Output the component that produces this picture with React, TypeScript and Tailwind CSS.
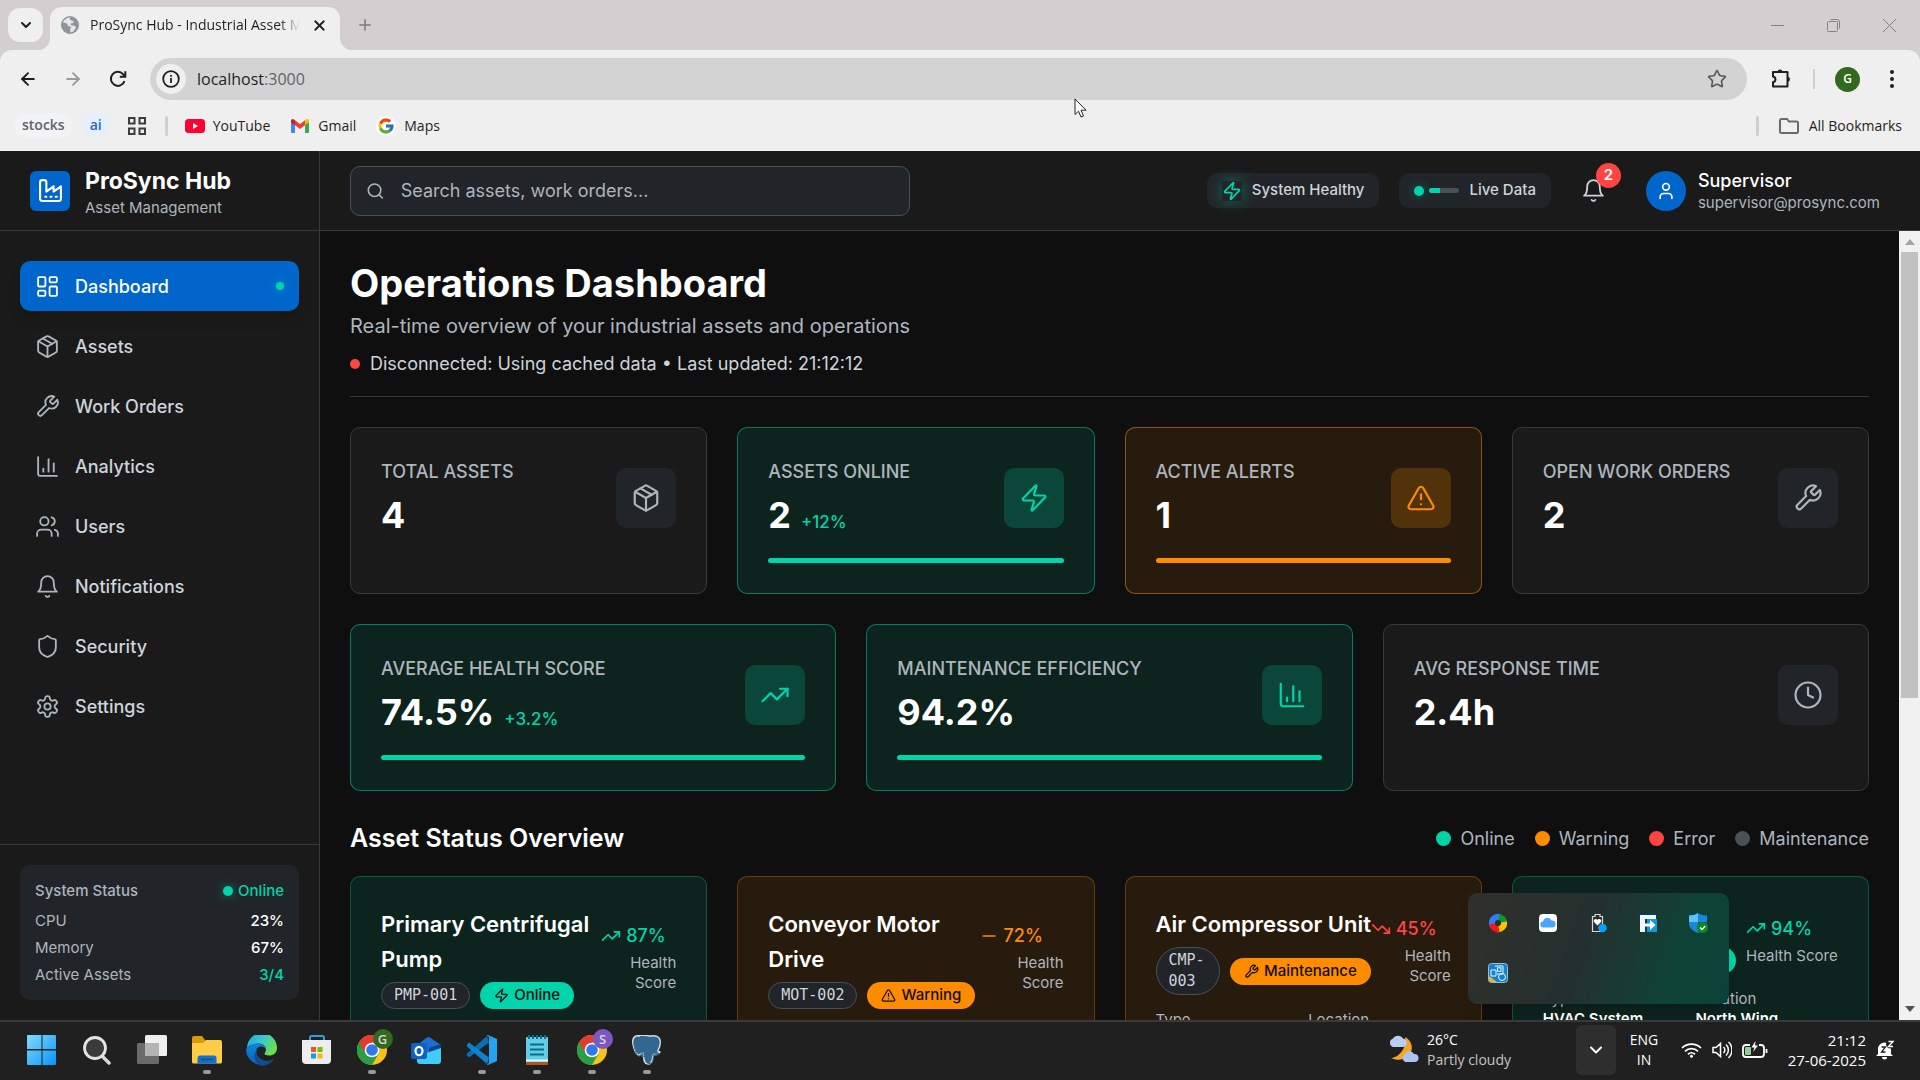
import React from "react";
import {
  LayoutDashboard,
  Package,
  ChartColumn,
  Users,
  Shield,
  Search,
  Zap,
  User,
  TriangleAlert,
  TrendingUp,
  TrendingDown,
  Minus,
  Clock,
  ChevronDown,
  Plus,
  X,
  Star,
  ArrowLeft,
  ArrowRight,
} from "lucide-react";
import { FcGoogle } from "react-icons/fc";
import { SiPostgresql } from "react-icons/si";

type IconProps = { size?: number; strokeWidth?: number; className?: string };

function Stroke({ size = 24, strokeWidth = 2, className, children }: IconProps & { children: React.ReactNode }) {
  return (
    <svg width={size} height={size} viewBox="0 0 24 24" fill="none" stroke="currentColor" strokeWidth={strokeWidth} strokeLinecap="round" strokeLinejoin="round" className={className} aria-hidden="true">
      {children}
    </svg>
  );
}

const Factory = (p: IconProps) => (
  <Stroke {...p}>
    <path d="M2 20a2 2 0 0 0 2 2h16a2 2 0 0 0 2-2V8l-7 5V8l-7 5V4a2 2 0 0 0-2-2H4a2 2 0 0 0-2 2Z" />
    <path d="M17 18h1M12 18h1M7 18h1" />
  </Stroke>
);
const Bell = (p: IconProps) => (
  <Stroke {...p}>
    <path d="M6 8a6 6 0 0 1 12 0c0 7 3 9 3 9H3s3-2 3-9" />
    <path d="M10.3 21a1.94 1.94 0 0 0 3.4 0" />
  </Stroke>
);
const Wrench = (p: IconProps) => (
  <Stroke {...p}>
    <path d="M14.7 6.3a1 1 0 0 0 0 1.4l1.6 1.6a1 1 0 0 0 1.4 0l3.77-3.77a6 6 0 0 1-7.94 7.94l-6.91 6.91a2.12 2.12 0 0 1-3-3l6.91-6.91a6 6 0 0 1 7.94-7.94l-3.76 3.76z" />
  </Stroke>
);
const Settings = (p: IconProps) => (
  <Stroke {...p}>
    <path d="M12.22 2h-.44a2 2 0 0 0-2 2v.18a2 2 0 0 1-1 1.73l-.43.25a2 2 0 0 1-2 0l-.15-.08a2 2 0 0 0-2.73.73l-.22.38a2 2 0 0 0 .73 2.73l.15.1a2 2 0 0 1 1 1.72v.51a2 2 0 0 1-1 1.74l-.15.09a2 2 0 0 0-.73 2.73l.22.38a2 2 0 0 0 2.73.73l.15-.08a2 2 0 0 1 2 0l.43.25a2 2 0 0 1 1 1.73V20a2 2 0 0 0 2 2h.44a2 2 0 0 0 2-2v-.18a2 2 0 0 1 1-1.73l.43-.25a2 2 0 0 1 2 0l.15.08a2 2 0 0 0 2.73-.73l.22-.39a2 2 0 0 0-.73-2.73l-.15-.08a2 2 0 0 1-1-1.74v-.5a2 2 0 0 1 1-1.74l.15-.09a2 2 0 0 0 .73-2.73l-.22-.38a2 2 0 0 0-2.73-.73l-.15.08a2 2 0 0 1-2 0l-.43-.25a2 2 0 0 1-1-1.73V4a2 2 0 0 0-2-2z" />
    <circle cx="12" cy="12" r="3" />
  </Stroke>
);

/* ---------- Browser window ---------- */

function BrowserChrome() {
  return (
    <div className="shrink-0 bg-[#d3cecf] font-['Open_Sans',sans-serif] text-[#1f1f1f]">
      <div className="flex h-[50px] items-center">
        <button aria-label="Search tabs" className="ml-2 grid h-[34px] w-[35px] place-items-center rounded-xl bg-[#efefef]">
          <ChevronDown size={16} strokeWidth={3} />
        </button>
        <div className="relative ml-[7px] flex h-[43px] w-[290px] items-center self-end rounded-t-xl bg-[#efefef] pr-3 pb-[7px] pl-[11px]">
          <svg className="absolute bottom-0 -left-3" width="12" height="12" aria-hidden="true"><path d="M12 0v12H0A12 12 0 0 0 12 0Z" fill="#efefef" /></svg>
          <svg className="absolute -right-3 bottom-0" width="12" height="12" aria-hidden="true"><path d="M0 0v12h12A12 12 0 0 1 0 0Z" fill="#efefef" /></svg>
          <svg width="18" height="18" viewBox="0 0 18 18" aria-hidden="true">
            <circle cx="9" cy="9" r="9" fill="#8f9499" />
            <path d="M9.500 1.600C6 1.500 3 3.600 2 6.800c1.500.3 3 .2 4 1 .8.8.3 1.900 1.400 2.300 1.200.4 2.300.2 2.600 1.200.2.800-.9 1.200-.9 2.200 0 .9.600 1.700 0 2.700 1.200.1 2.600-.3 3.500-.9.200-1.200 1.300-1.700 1.900-2.800.5-.9.400-2-.5-2.500-1.200-.7-2.600-.1-3.700-.7-.7-.4-.9-1.300-.3-1.800.7-.5 1.700-.1 2.300-.8.500-.7.100-1.500-.6-1.900-.9-.5-2.200-.3-2.700-1.200-.3-.7 0-1.500.5-2Z" fill="#e4e6e8" />
          </svg>
          <span className="ml-[11px] w-[210px] overflow-hidden bg-gradient-to-r from-[#1f1f1f] from-90% to-transparent to-100% bg-clip-text text-sm whitespace-nowrap text-transparent">ProSync Hub - Industrial Asset M</span>
          <button aria-label="Close tab" className="ml-auto"><X size={17} strokeWidth={2.500} /></button>
        </div>
        <button aria-label="New tab" className="ml-4 text-[#7d7a7a]"><Plus size={18} strokeWidth={2} /></button>
        <div className="ml-auto flex items-center gap-[43px] pr-6 text-[#858283]">
          <button aria-label="Minimize"><svg width="13" height="13"><path d="M0 6.500h13" stroke="currentColor" /></svg></button>
          <button aria-label="Restore"><svg width="13" height="13" fill="none" stroke="currentColor"><path d="M3.500.5H10a2.500 2.500 0 0 1 2.500 2.500v6.500" /><rect x=".5" y="2.500" width="10" height="10" rx="1" /></svg></button>
          <button aria-label="Close"><svg width="13" height="13"><path d="M0 0l13 13M13 0L0 13" stroke="currentColor" /></svg></button>
        </div>
      </div>
      <div className="rounded-t-xl bg-[#efefef]">
        <div className="flex h-[58px] items-center pr-[18px] pl-[18px]">
          <button aria-label="Back"><ArrowLeft size={20} strokeWidth={2.300} /></button>
          <button aria-label="Forward" className="ml-[25px] text-[#9a9a9a]"><ArrowRight size={20} strokeWidth={2.300} /></button>
          <button aria-label="Reload" className="ml-[25px]">
            <svg width="20" height="20" viewBox="0 0 20 20" fill="none" stroke="currentColor" strokeWidth="2"><path d="M16.500 12.200A7 7 0 1 1 15.200 5.300L17 7" /><path d="M17.300 2.200v5.500h-5.500" /></svg>
          </button>
          <div className="ml-[22px] flex h-[42px] flex-1 items-center rounded-full bg-[#d3d3d3] pr-5 pl-[6px]">
            <button aria-label="Site information" className="grid size-[30px] place-items-center rounded-full bg-[#efefef]">
              <svg width="18" height="18" fill="none" stroke="currentColor" strokeWidth="1.800"><circle cx="9" cy="9" r="7.800" /><path d="M9 8v5M9 5v1.800" /></svg>
            </button>
            <div className="ml-[11px] flex-1 text-base">localhost<span className="text-[#5f6368]">:3000</span></div>
            <button aria-label="Bookmark this tab" className="text-[#5c5c5c]"><Star size={20} strokeWidth={2} strokeLinejoin="miter" /></button>
          </div>
          <button aria-label="Extensions" className="ml-[23px]">
            <svg width="22" height="22" viewBox="0 0 22 22"><path d="M3 4h14.500v14.500H3v-4.200a3 3 0 0 0 0-5.900Z" fill="none" stroke="currentColor" strokeWidth="2" strokeLinejoin="round" /><path d="M7.500 4a2.500 2.500 0 0 1 5 0ZM17.500 8.800a2.500 2.500 0 0 1 0 5Z" fill="currentColor" /></svg>
          </button>
          <span className="ml-[21px] h-5 w-[2px] bg-[#d3cecf]" />
          <button aria-label="Profile G" className="ml-5 grid size-[25px] place-items-center rounded-full bg-[#33691e] text-xs font-semibold text-white">G</button>
          <button aria-label="Menu" className="ml-[22px]">
            <svg width="20" height="20" fill="currentColor"><circle cx="10" cy="3" r="2" /><circle cx="10" cy="10" r="2" /><circle cx="10" cy="17" r="2" /></svg>
          </button>
        </div>
        <div className="flex h-[43px] items-start pr-[18px] pl-[15px] text-sm">
          <a href="#stocks" className="mt-[5px] flex h-6 items-center rounded-lg bg-[#f1f3f4] px-[7px] font-semibold text-[#5f6368]">stocks</a>
          <a href="#ai" className="mt-[5px] ml-[11px] flex h-6 items-center rounded-lg bg-[#e6effd] px-[7px] font-semibold text-[#1967d2]">ai</a>
          <div className="ml-[19px] flex h-9 flex-1 items-center">
            <button aria-label="Apps">
              <svg width="18" height="18" fill="none" stroke="#3c3c3c" strokeWidth="2"><rect x="1" y="1" width="5.500" height="5.500" /><rect x="11.500" y="1" width="5.500" height="5.500" /><rect x="1" y="11.500" width="5.500" height="5.500" /><rect x="11.500" y="11.500" width="5.500" height="5.500" /></svg>
            </button>
            <span className="ml-[19px] h-5 w-[3px] rounded bg-[#d3cecf]" />
            <a href="#youtube" className="ml-[17px] flex items-center gap-2">
              <svg width="20" height="14"><rect width="20" height="14" rx="3.500" fill="#ff0033" /><path d="M8 4v6l5-3Z" fill="#fff" /></svg>YouTube
            </a>
            <a href="#gmail" className="ml-[21px] flex items-center gap-[9px]">
              <svg width="18" height="14" viewBox="0 0 18 14"><path d="M0 2.500 4 5.500V14H1.200A1.200 1.200 0 0 1 0 12.800Z" fill="#4285f4" /><path d="M18 2.500 14 5.500V14h2.800a1.200 1.200 0 0 0 1.200-1.200Z" fill="#34a853" /><path d="M14 1.500v4.700l4-3V2c0-2-2-2.600-3.300-1.200Z" fill="#fbbc04" /><path d="M4 1.500v4.700L0 3.200V2C0 0 2-.6 3.300.8Z" fill="#c5221f" /><path d="M4 1.300 9 5l5-3.700v4.900L9 10 4 6.200Z" fill="#ea4335" /></svg>Gmail
            </a>
            <a href="#maps" className="ml-5 flex items-center gap-2">
              <span className="grid size-5 place-items-center rounded-full bg-white"><FcGoogle size={18} /></span>Maps
            </a>
            <span className="ml-auto h-5 w-[3px] rounded bg-[#d3cecf]" />
            <a href="#bookmarks" className="ml-5 flex items-center gap-[10px]">
              <svg width="20" height="16" fill="none" stroke="#6a6a6a" strokeWidth="2"><path d="M1 13V2.500A1.500 1.500 0 0 1 2.500 1H8l2 2.500h7.500A1.500 1.500 0 0 1 19 5v8.500a1.500 1.500 0 0 1-1.500 1.500h-15A1.500 1.500 0 0 1 1 13.500Z" /></svg>All Bookmarks
            </a>
          </div>
        </div>
      </div>
    </div>
  );
}

/* ---------- Application ---------- */

const navItems = [
  { label: "Dashboard", Icon: LayoutDashboard, active: true },
  { label: "Assets", Icon: Package },
  { label: "Work Orders", Icon: Wrench },
  { label: "Analytics", Icon: ChartColumn },
  { label: "Users", Icon: Users },
  { label: "Notifications", Icon: Bell },
  { label: "Security", Icon: Shield },
  { label: "Settings", Icon: Settings },
];

function Sidebar() {
  return (
    <aside className="flex w-80 shrink-0 flex-col border-r border-[#343a40] bg-[#1a1a1a]">
      <div className="flex h-20 shrink-0 items-center gap-[15px] border-b border-[#343a40] px-[30px]">
        <div className="grid size-10 place-items-center rounded-md bg-[#0066cc] text-white"><Factory size={25} /></div>
        <div className="pt-1">
          <div className="text-[23px] leading-[30px] font-bold text-white">ProSync Hub</div>
          <div className="text-[15px] leading-6 text-[#adb5bd]">Asset Management</div>
        </div>
      </div>
      <nav className="flex flex-1 flex-col gap-[10px] px-5 pt-[30px]">
        {navItems.map(({ label, Icon, active }) => (
          <a
            key={label}
            href={"#" + label.toLowerCase().replace(" ", "-")}
            className={
              active
                ? "flex h-[50px] items-center gap-[15px] rounded-[10px] bg-[#0066cc] px-[15px] text-[18px] font-medium text-white shadow-lg"
                : "flex h-[50px] items-center gap-[15px] rounded-[10px] px-[15px] text-[18px] font-medium text-[#ced4da]"
            }
          >
            <Icon size={25} strokeWidth={1.750} className={active ? "text-white" : "text-[#adb5bd]"} />
            {label}
            {active && <span className="ml-auto size-2 rounded-full bg-[#00d4aa] shadow-[0_0_10px_#00d4aa66]" />}
          </a>
        ))}
      </nav>
      <div className="border-t border-[#343a40] p-5">
        <dl className="flex flex-col gap-[5px] rounded-[10px] bg-[#212529] px-[15px] pt-[15px] pb-[14px] text-[15px] leading-[22px]">
          <div className="mb-[3px] flex justify-between font-medium">
            <dt className="text-[#adb5bd]">System Status</dt>
            <dd className="flex items-center gap-[5px] text-[#00d4aa]">
              <span className="size-[10px] rounded-full bg-[#00d4aa] shadow-[0_0_10px_#00d4aa80]" />
              Online
            </dd>
          </div>
          <div className="flex justify-between"><dt className="text-[#adb5bd]">CPU</dt><dd className="font-medium text-white">23%</dd></div>
          <div className="flex justify-between"><dt className="text-[#adb5bd]">Memory</dt><dd className="font-medium text-white">67%</dd></div>
          <div className="flex justify-between"><dt className="text-[#adb5bd]">Active Assets</dt><dd className="font-medium text-[#00d4aa]">3/4</dd></div>
        </dl>
      </div>
    </aside>
  );
}

function TopBar() {
  return (
    <header className="flex h-20 shrink-0 items-center border-b border-[#343a40] bg-[#1a1a1a] pr-10 pl-[30px]">
      <label className="flex h-[50px] w-full max-w-[560px] items-center gap-4 rounded-[10px] border border-[#495057] bg-[#212529] px-[15px] text-[#adb5bd]">
        <Search size={20} strokeWidth={2} />
        <input type="search" aria-label="Search" placeholder="Search assets, work orders..." className="w-full bg-transparent text-[18px] outline-none placeholder:text-[#adb5bd]" />
      </label>
      <div className="ml-auto flex items-center gap-5 text-[15px] font-medium text-[#ced4da]">
        <div className="flex h-[35px] items-center gap-[10px] rounded-[10px] bg-[#212529] px-[15px]">
          <Zap size={20} className="text-[#00d4aa] shadow-[0_0_15px_#00d4aa66]" />
          System Healthy
        </div>
        <div className="flex h-[35px] items-center rounded-[10px] bg-[#212529] px-[15px]">
          <span className="size-[10px] rounded-full bg-[#00d4aa] shadow-[0_0_10px_#00d4aa66]" />
          <span className="ml-[5px] h-[5px] w-[30px] overflow-hidden rounded-full bg-[#495057]"><span className="block h-full w-[11px] bg-[#00d4aa]" /></span>
          <span className="ml-[10px]">Live Data</span>
        </div>
      </div>
      <button aria-label="Notifications, 2 unread" className="relative ml-[30px] text-[#ced4da]">
        <Bell size={25} strokeWidth={1.750} />
        <span className="absolute -top-[15px] left-[15px] grid size-[25px] place-items-center rounded-full bg-[#ff4444] text-[15px] font-semibold text-white">2</span>
      </button>
      <button className="ml-10 flex items-center gap-3 text-left">
        <span className="grid size-10 place-items-center rounded-full bg-[#0066cc] text-white"><User size={20} strokeWidth={2} /></span>
        <span className="pt-[2px]">
          <span className="block text-[18px] leading-[22px] font-medium text-white">Supervisor</span>
          <span className="block text-[15px] leading-[22px] text-[#adb5bd]">supervisor@prosync.com</span>
        </span>
      </button>
    </header>
  );
}

const tones = {
  neutral: { card: "border-[#343a40] bg-[#1a1a1a]", icon: "bg-[#212529] text-[#adb5bd]", bar: "" },
  good: { card: "border-[#00d4aa]/50 bg-[#00d4aa]/10", icon: "bg-[#00d4aa]/20 text-[#00d4aa]", bar: "bg-[#00d4aa]" },
  warn: { card: "border-[#ff8c00]/50 bg-[#ff8c00]/10", icon: "bg-[#ff8c00]/20 text-[#ff8c00]", bar: "bg-[#ff8c00]" },
};

type Stat = { label: string; value: string; delta?: string; tone: keyof typeof tones; Icon: React.ComponentType<IconProps> };

function StatCard({ label, value, delta, tone, Icon }: Stat) {
  const t = tones[tone];
  return (
    <section className={"min-h-[167px] rounded-[10px] border p-[30px] " + t.card}>
      <div className="flex items-center justify-between">
        <div>
          <h3 className="text-[18px] leading-[27px] font-medium text-[#adb5bd]">{label}</h3>
          <div className="mt-2 flex items-baseline gap-[10px]">
            <span className="text-4xl leading-[45px] font-bold text-white">{value}</span>
            {delta && <span className="text-[17px] font-medium text-[#00d4aa]">{delta}</span>}
          </div>
        </div>
        <div className={"grid size-[60px] place-items-center rounded-[10px] " + t.icon}><Icon size={30} strokeWidth={1.750} /></div>
      </div>
      {t.bar && <div className={"mt-5 h-[5px] rounded-full " + t.bar} />}
    </section>
  );
}

const topStats: Stat[] = [
  { label: "TOTAL ASSETS", value: "4", tone: "neutral", Icon: Package },
  { label: "ASSETS ONLINE", value: "2", delta: "+12%", tone: "good", Icon: Zap },
  { label: "ACTIVE ALERTS", value: "1", tone: "warn", Icon: TriangleAlert },
  { label: "OPEN WORK ORDERS", value: "2", tone: "neutral", Icon: Wrench },
];
const midStats: Stat[] = [
  { label: "AVERAGE HEALTH SCORE", value: "74.5%", delta: "+3.2%", tone: "good", Icon: TrendingUp },
  { label: "MAINTENANCE EFFICIENCY", value: "94.2%", tone: "good", Icon: ChartColumn },
  { label: "AVG RESPONSE TIME", value: "2.4h", tone: "neutral", Icon: Clock },
];
const legend = [
  { label: "Online", dot: "bg-[#00d4aa]" },
  { label: "Warning", dot: "bg-[#ff8c00]" },
  { label: "Error", dot: "bg-[#ff4444]" },
  { label: "Maintenance", dot: "bg-[#495057]" },
];

type Asset = {
  title?: string;
  tag?: string;
  status: string;
  StatusIcon: React.ComponentType<IconProps>;
  health: string;
  HealthIcon: React.ComponentType<IconProps>;
  healthColor: string;
  scoreWidth: string;
  card: string;
  pill: string;
  details?: { type?: string; location?: string };
};

const goodCard = "border-[#00d4aa]/30 bg-[#00d4aa]/10";
const warnCard = "border-[#ff8c00]/30 bg-[#ff8c00]/10";

const assets: Asset[] = [
  { title: "Primary Centrifugal\nPump", tag: "PMP-001", status: "Online", StatusIcon: Zap, health: "87%", HealthIcon: TrendingUp, healthColor: "text-[#00d4aa]", scoreWidth: "w-[75px]", card: goodCard, pill: "bg-[#00d4aa]" },
  { title: "Conveyor Motor\nDrive", tag: "MOT-002", status: "Warning", StatusIcon: TriangleAlert, health: "72%", HealthIcon: Minus, healthColor: "text-[#ff8c00]", scoreWidth: "w-[85px]", card: warnCard, pill: "bg-[#ff8c00]" },
  { title: "Air Compressor Unit", tag: "CMP-003", status: "Maintenance", StatusIcon: Wrench, health: "45%", HealthIcon: TrendingDown, healthColor: "text-[#ff4444]", scoreWidth: "w-[80px]", card: warnCard, pill: "bg-[#ff8c00]", details: {} },
  { status: "Online", StatusIcon: Zap, health: "94%", HealthIcon: TrendingUp, healthColor: "text-[#00d4aa]", scoreWidth: "w-[92px]", card: goodCard, pill: "bg-[#00d4aa]", details: { type: "HVAC System", location: "North Wing" } },
];

function AssetCard(a: Asset) {
  return (
    <article className={"min-h-[200px] rounded-[10px] border p-[30px] " + a.card}>
      <div className="flex items-center justify-between">
        <div className="min-w-0 flex-1">
          <h3 className="min-h-[35px] text-[22px] leading-[35px] font-semibold whitespace-pre text-white">{a.title}</h3>
          <div className="mt-[5px] flex items-center gap-[10px]">
            {a.tag ? (
              <span className="rounded-[24px] border border-[#495057] bg-[#212529] px-3 py-[2px] font-['DejaVu_Sans_Mono',monospace] text-[15px] leading-[21px] text-[#ced4da]">{a.tag}</span>
            ) : (
              <span className="w-[89px]" />
            )}
            <span className={"flex h-[27px] shrink-0 items-center gap-[5px] rounded-full px-[14px] text-[15px] font-medium text-[#0f0f0f] " + a.pill}>
              <a.StatusIcon size={15} strokeWidth={2} />
              {a.status}
            </span>
          </div>
        </div>
        <div className={"shrink-0 " + a.scoreWidth}>
          <div className={"flex h-[25px] items-center gap-[5px] text-[18px] font-medium " + a.healthColor}>
            <a.HealthIcon size={20} strokeWidth={2} />
            {a.health}
          </div>
          <div className={a.title ? "mt-[5px] ml-auto w-[50px] text-right text-[15px] leading-5 text-[#adb5bd]" : "mt-[5px] text-[15px] leading-5 whitespace-nowrap text-[#adb5bd]"}>Health Score</div>
        </div>
      </div>
      {a.details && (
        <dl className="mt-[15px] grid grid-cols-2 gap-[10px] text-[15px] leading-5">
          <div><dt className="text-[#adb5bd]">Type</dt><dd className="font-semibold text-white">{a.details.type}</dd></div>
          <div><dt className="text-[#adb5bd]">Location</dt><dd className="font-semibold text-white">{a.details.location}</dd></div>
        </dl>
      )}
    </article>
  );
}

function Dashboard() {
  return (
    <main className="min-w-0 flex-1 overflow-hidden bg-[#0f0f0f] p-[30px]">
      <div className="border-b border-[#343a40] pb-5">
        <h1 className="text-[38px] leading-[45px] font-bold text-white">Operations Dashboard</h1>
        <p className="mt-[5px] text-xl leading-[30px] text-[#adb5bd]">Real-time overview of your industrial assets and operations</p>
        <p className="mt-[10px] flex items-center gap-[10px] text-[18px] leading-[25px] text-[#ced4da]">
          <span className="size-[10px] rounded-full bg-[#ff4444]" />
          Disconnected: Using cached data • Last updated: 21:12:12
        </p>
      </div>
      <div className="mt-[30px] grid grid-cols-4 gap-[30px]">{topStats.map((s) => <StatCard key={s.label} {...s} />)}</div>
      <div className="mt-[30px] grid grid-cols-3 gap-[30px]">{midStats.map((s) => <StatCard key={s.label} {...s} />)}</div>
      <div className="mt-[30px] flex h-[35px] items-center justify-between">
        <h2 className="text-[25px] font-semibold text-white">Asset Status Overview</h2>
        <ul className="flex gap-5 text-[18px] text-[#adb5bd]">
          {legend.map((l) => (
            <li key={l.label} className="flex items-center gap-[9px]"><span className={"size-[15px] rounded-full " + l.dot} />{l.label}</li>
          ))}
        </ul>
      </div>
      <div className="mt-5 grid grid-cols-4 gap-[30px]">{assets.map((a) => <AssetCard key={a.health} {...a} />)}</div>
    </main>
  );
}

function ScrollBar() {
  return (
    <div className="flex w-[21px] shrink-0 flex-col items-center justify-between bg-[#f1f1f1] py-2 text-[#505050]" aria-hidden="true">
      <svg width="10" height="6"><path d="M5 0l5 6H0Z" fill="#a3a3a3" /></svg>
      <div className="mt-[7px] mb-auto h-[446px] w-[17px] bg-[#c1c1c1]" />
      <svg width="10" height="6"><path d="M5 6L0 0h10Z" fill="currentColor" /></svg>
    </div>
  );
}

/* ---------- Desktop ---------- */

const TrayCell = ({ label, children }: { label: string; children: React.ReactNode }) => (
  <button aria-label={label} className="grid size-[50px] place-items-center">{children}</button>
);

function TrayPopup() {
  return (
    <div className="fixed right-[191px] bottom-[76px] grid h-[111px] w-[261px] grid-cols-[repeat(5,50px)] content-start justify-start rounded-[9px] bg-linear-[110deg,#30302c_0%,#24302e_45%,#0f4337_78%,#0b4138_100%] pt-[5px] pl-[5px] shadow-lg">
      <TrayCell label="Color ring">
        <svg width="20" height="20" viewBox="0 0 20 20" fill="none" strokeWidth="6"><path d="M9 4a6 6 0 0 1 7 7" stroke="#0a9a28" /><path d="M16 9a6 6 0 0 1-7 7" stroke="#ffc400" /><path d="M11 16a6 6 0 0 1-7-7" stroke="#f01818" /><path d="M4 11a6 6 0 0 1 7-7" stroke="#2f7df6" /></svg>
      </TrayCell>
      <TrayCell label="Cloud storage">
        <svg width="20" height="20" viewBox="0 0 20 20"><rect x="1" y="1" width="18" height="18" rx="4" fill="#fff" /><path d="M5.500 14.500a3 3 0 0 1-.5-6 4.500 4.500 0 0 1 8.500-1 3.500 3.500 0 0 1 1 7Z" fill="#4aa6f8" /></svg>
      </TrayCell>
      <TrayCell label="Battery health">
        <svg width="20" height="20" viewBox="0 0 20 20"><path d="M4.500 3.500H7V1.500h5v2h2.500v15h-10Z" fill="#2b2f2e" stroke="#d8d8d8" strokeWidth="1.200" /><path d="M9.500 12.500 6 9a2 2 0 0 1 3.500-2A2 2 0 0 1 13 9Z" fill="#fff" /><circle cx="14.500" cy="15" r="4.300" fill="#00a2ff" /></svg>
      </TrayCell>
      <TrayCell label="File transfer">
        <svg width="20" height="20" viewBox="0 0 20 20"><path d="M0 0h19v19H3V5H0Z" fill="#0a3a63" /><path d="M9 6h10v13H9Z" fill="#139ad6" /><path d="M2 2h16v4H7v13H2Z" fill="#f4f8fa" /><path d="M7 10.500h5V7l5.500 5-5.500 5v-3.500H7Z" fill="#fff" /></svg>
      </TrayCell>
      <TrayCell label="Windows Security">
        <svg width="20" height="20" viewBox="0 0 20 20"><path d="M10 0c2.500 1.800 5.500 2.500 9 2.500V10c0 5-4 8-9 10-5-2-9-5-9-10V2.500C4.500 2.500 7.500 1.800 10 0Z" fill="#1c86dc" /><path d="M10 0C7.500 1.800 4.500 2.500 1 2.500V9h9Z" fill="#5cc3f5" /><path d="M10 9h9c0 6-4 9-9 11Z" fill="#0a56a8" /><circle cx="14.500" cy="14.500" r="5.500" fill="#0b8a1c" /><path d="m12 14.500 2 2 3.200-3.500" stroke="#fff" strokeWidth="1.500" fill="none" /></svg>
      </TrayCell>
      <TrayCell label="Graphics command center">
        <svg width="20" height="20" viewBox="0 0 20 20" fill="none" stroke="#e6f6ff"><rect x=".5" y=".5" width="19" height="19" rx="3" fill="#1282cf" stroke="#a9b9c2" /><path d="M1 13v4.500A1.500 1.500 0 0 0 2.500 19H9Z" fill="#e9b04a" stroke="none" /><path d="M3 7h5v6H3ZM7 3h8v8H9" /><rect x="9.500" y="4.800" width="3.500" height="3.500" /><circle cx="14" cy="14" r="3.500" /></svg>
      </TrayCell>
    </div>
  );
}

function ChromeLogo({ badge, color }: { badge: string; color: string }) {
  return (
    <span className="relative">
      <svg width="30" height="30" viewBox="0 0 30 30" className="block">
        <circle cx="15" cy="15" r="15" fill="#f7c416" />
        <path d="M15 15 2 7.500A15 15 0 0 1 28 7.500H15Z" fill="#e33b2e" />
        <path d="M2 7.500A15 15 0 0 0 15 30l6.500-11.300L15 15Z" fill="#2c9c47" />
        <path d="M2 7.500 8.500 18.800 15 8.200Z" fill="#e33b2e" />
        <path d="M2 7.500 8.500 18.800a7.500 7.500 0 0 0 6.500 3.700L10.500 29A15 15 0 0 1 2 7.500Z" fill="#2c9c47" />
        <circle cx="15" cy="15" r="7.300" fill="#fff" /><circle cx="15" cy="15" r="5.800" fill="#3079ea" />
      </svg>
      <span className={"absolute -top-[6px] -right-[6px] grid size-5 place-items-center rounded-full text-[13px] font-semibold text-[#d5d5d5] " + color}>{badge}</span>
    </span>
  );
}

const apps: { label: string; open?: boolean; icon: React.ReactNode }[] = [
  { label: "Start", icon: <svg width="30" height="30"><defs><linearGradient id="win" x1="0" y1="0" x2="1" y2="1"><stop offset="0" stopColor="#7fdcff" /><stop offset="1" stopColor="#0a93f5" /></linearGradient></defs><path d="M1 0h13.500v14H0V1a1 1 0 0 1 1-1ZM15.500 0H28a1 1 0 0 1 1 1v13H15.500ZM0 15.500h14.500V30H1a1 1 0 0 1-1-1ZM15.500 15.500H29V29a1 1 0 0 1-1 1H15.500Z" fill="url(#win)" /></svg> },
  { label: "Search", icon: <svg width="30" height="30" fill="none"><path d="M19.500 20.500 27 28" stroke="#d8d8d8" strokeWidth="3.500" strokeLinecap="round" /><circle cx="13" cy="13" r="10.500" fill="#3b3b3b" stroke="#e4e4e4" strokeWidth="2.800" /></svg> },
  { label: "Task view", icon: <svg width="30" height="30"><rect x="0" y="8" width="22" height="21" rx="1.500" fill="#6b6b6b" /><rect x="8" y="0" width="22" height="21" rx="1.500" fill="#efefef" /><rect x="8" y="8" width="14" height="13" fill="#b4b4b4" /></svg> },
  { label: "File Explorer", open: true, icon: <svg width="30" height="30"><path d="M0 3a2 2 0 0 1 2-2h8l3 4v5H0Z" fill="#d99a0a" /><path d="M0 8h11l3-3h14a2 2 0 0 1 2 2v20a1.500 1.500 0 0 1-1.500 1.500h-27A1.500 1.500 0 0 1 0 27Z" fill="#ffcd45" /><path d="M5.500 28.500V23a2.500 2.500 0 0 1 2.500-2.500h14a2.500 2.500 0 0 1 2.500 2.500v5.500Z" fill="#1272c9" /><path d="M9 24.500h12" stroke="#0a4d94" strokeWidth="1.500" /></svg> },
  { label: "Edge", icon: <svg width="31" height="31" viewBox="0 0 31 31"><defs><linearGradient id="edgeTop" x1="0" y1="0" x2="1" y2=".5"><stop offset="0" stopColor="#1fa0e0" /><stop offset=".5" stopColor="#36c6d6" /><stop offset="1" stopColor="#6be04a" /></linearGradient><linearGradient id="edgeBody" x1="0" y1="0" x2="0" y2="1"><stop offset="0" stopColor="#0f86d8" /><stop offset="1" stopColor="#0c5fb4" /></linearGradient></defs><path d="M1 13A15 15 0 0 1 31 13c0 5-3.500 7.500-8 7.500-3 0-4.500-1-4.500-2 0-.8 1.500-1.500 1.500-4 0-3-3-6-7.500-6C7 8.500 2 11.500 1 13Z" fill="url(#edgeTop)" /><path d="M0 15C1 10.500 6 8.500 11 8.500c5 0 9 3 9 6-1-2-3-3-5-3-5 0-8 8 0 13 5 3 10 1.500 13-1A15.500 15.500 0 0 1 0 15Z" fill="url(#edgeBody)" /><path d="M12.500 13c-5 6 0 14.500 8.500 13.500 4-.5 6-2.500 7-3A15 15 0 0 1 16 31C8 29 6 18 12.500 13Z" fill="#134a8c" /></svg> },
  { label: "Microsoft Store", icon: <svg width="30" height="30"><path d="M8 6V2.500A1.500 1.500 0 0 1 9.500 1h11A1.500 1.500 0 0 1 22 2.500V6" fill="none" stroke="#1ba3ea" strokeWidth="2" /><path d="M0 5h29v20a4 4 0 0 1-4 4H4a4 4 0 0 1-4-4Z" fill="#ededed" /><rect x="9" y="12" width="5" height="5" fill="#f0502a" /><rect x="15.500" y="12" width="5" height="5" fill="#7eb900" /><rect x="9" y="18.500" width="5" height="5" fill="#05a3ee" /><rect x="15.500" y="18.500" width="5" height="5" fill="#ffb800" /></svg> },
  { label: "Chrome, profile G", open: true, icon: <ChromeLogo badge="G" color="bg-[#33691e]" /> },
  { label: "Outlook", icon: <svg width="31" height="28"><path d="M6 9 16 1.500a3 3 0 0 1 3 0L30 9v10L6 20Z" fill="#1b6fd0" /><path d="M18 12 30 8v6l-12 8Z" fill="#0a3f93" /><path d="M6 20 30 12v13a3 3 0 0 1-3 3H9a3 3 0 0 1-3-3Z" fill="#3fcdf5" /><rect x="0" y="7" width="16" height="16" rx="2" fill="#0f63bd" /><ellipse cx="8" cy="15" rx="3.500" ry="4.200" fill="none" stroke="#fff" strokeWidth="2.200" /></svg> },
  { label: "Visual Studio Code", open: true, icon: <svg width="30" height="30" viewBox="0 0 30 30"><path d="m22 7.500-20 15-2-2v-2L20 1Z" fill="#0a6db8" /><path d="M22 22.500 2 7.500l-2 2v2L20 29Z" fill="#0d83cf" /><path d="M21 0 30 4v22l-9 4-1.500-.5L22 28V2L19.500.5Z" fill="#25a3ee" /></svg> },
  { label: "Notepad", open: true, icon: <svg width="24" height="30"><rect x="1" y="26" width="22" height="4" fill="#b0561a" /><rect x="1" y="2" width="22" height="25" rx="1" fill="#63cde6" /><rect x="1" y="24.500" width="22" height="2" fill="#e8f4f8" /><path d="M4 0v4M8 0v4M12 0v4M16 0v4M20 0v4" stroke="#0d6f90" strokeWidth="2" /><path d="M5 9.500h14M5 14.500h14M5 19.500h14" stroke="#0c6a92" strokeWidth="2" /></svg> },
  { label: "Chrome, profile S", open: true, icon: <ChromeLogo badge="S" color="bg-[#7e57c2]" /> },
  { label: "PostgreSQL", open: true, icon: <span className="relative grid size-[30px] place-items-center"><svg className="absolute" width="30" height="30" viewBox="0 0 30 30"><path d="M7 1C2 0 0 4 1 9s3 11 6 11c2 0 2-2 4-2 1 4 0 11 5 11 6 0 4-10 6-10 2 0 6-1 6-2s-3 0-2-2c3-5 3-11 0-13-3-2-7-1-9-1-3-1-7-1-10-1Z" fill="#336791" stroke="#d3dce4" strokeWidth="1.500" /></svg><SiPostgresql size={27} className="relative text-[#336791]" /></span> },
];

function TaskBar() {
  return (
    <footer className="flex h-[60px] shrink-0 items-center border-t-2 border-[#3a3a3a] bg-[#202020] pb-[3px] pl-[14px] font-['Open_Sans',sans-serif] text-[15px] leading-5 text-white">
      {apps.map((a) => (
        <button key={a.label} aria-label={a.label} className="flex h-full w-[55px] shrink-0 flex-col items-center">
          <span className="mt-[12px] grid h-8 place-items-center">{a.icon}</span>
          {a.open && <span className="mt-1 h-1 w-2 shrink-0 rounded-full bg-[#9a9a9a]" />}
        </button>
      ))}
      <div className="ml-auto flex items-center gap-2">
        <svg width="31" height="31" viewBox="0 0 31 31"><path d="M17 3c8 4 9 14 3 19-4 4-11 5-17 2 7 0 16-9 14-21Z" fill="#f5a524" /><path d="M5 13a4.500 4.500 0 0 1 0-8.500 6 6 0 0 1 10 0 4.300 4.300 0 0 1 0 8.500Z" fill="#b9cdf3" /><path d="M17 28a4.500 4.500 0 0 1 0-8 5 5 0 0 1 9 0 4 4 0 0 1 1 8Z" fill="#aac3f0" /></svg>
        <div className="text-sm leading-5"><div>26°C</div><div className="text-[#c4c4c4]">Partly cloudy</div></div>
      </div>
      <button aria-label="Hidden icons" className="ml-[65px] grid h-[50px] w-10 place-items-center rounded-md bg-[#2e2e2e]"><ChevronDown size={20} strokeWidth={2.300} /></button>
      <button className="ml-3 w-8 text-center text-sm leading-5">ENG IN</button>
      <div className="ml-[21px] flex items-center gap-[10px]">
        <svg width="21" height="18" fill="none" stroke="#fff" strokeWidth="1.700"><path d="M1 7a13.500 13.500 0 0 1 19 0M4 10.300a9.200 9.200 0 0 1 13 0M7 13.300a5 5 0 0 1 7 0" /><circle cx="10.500" cy="15.300" r="1.500" fill="#fff" stroke="none" /></svg>
        <svg width="20" height="18" fill="none" stroke="#fff" strokeWidth="1.500"><path d="M1 6.500v5h3l4.500 4V2.500L4 6.500ZM11.500 6a4 4 0 0 1 0 6M14 3.500a7.500 7.500 0 0 1 0 11M16.500 1a11 11 0 0 1 0 16" /></svg>
        <svg width="26" height="18" fill="none" stroke="#fff" strokeWidth="1.800"><path d="M8 4H4a3 3 0 0 0-3 3v6a3 3 0 0 0 3 3h15a3 3 0 0 0 3-3V7a3 3 0 0 0-3-3h-2" /><path d="M24.500 8v4" /><rect x="3" y="6" width="6" height="8" rx="1" fill="#8fce8f" stroke="none" /><path d="m13.500 0-4 6.500h3L11 11l5-6.500h-3Z" fill="#fff" stroke="none" /></svg>
      </div>
      <button className="ml-4 w-[82px] text-right text-[15px] leading-5 whitespace-nowrap"><span className="block">21:12</span><span className="block">27-06-2025</span></button>
      <button aria-label="Notifications" className="mr-[25px] ml-[10px]">
        <svg width="19" height="20"><path d="M2 14V9a6.500 6.500 0 0 1 13 0v5l2 2H0ZM6 17h5a2.500 2.500 0 0 1-5 0Z" fill="#fff" /><path d="M5.500 7h4L5.500 12h4" fill="none" stroke="#202020" strokeWidth="1.300" /><circle cx="14.500" cy="4" r="4.500" fill="#202020" /><path d="M12.500 1.500h4.500l-4.500 5h4.500" fill="none" stroke="#fff" strokeWidth="1.400" /></svg>
      </button>
    </footer>
  );
}

export default function App() {
  return (
    <div className="flex h-screen flex-col overflow-hidden bg-[#0f0f0f] font-[Inter,sans-serif]">
      <BrowserChrome />
      <div className="flex min-h-0 flex-1">
        <Sidebar />
        <div className="flex min-w-0 flex-1 flex-col">
          <TopBar />
          <div className="flex min-h-0 flex-1">
            <Dashboard />
            <ScrollBar />
          </div>
        </div>
      </div>
      <TaskBar />
      <TrayPopup />
      <svg className="pointer-events-none fixed top-[98px] left-[1074px]" width="13" height="20" aria-hidden="true"><path d="M1 1v15.500l3.500-3.300 2.500 5.800 2.500-1-2.500-5.800h5Z" fill="#fff" stroke="#222" strokeLinejoin="round" /></svg>
    </div>
  );
}
